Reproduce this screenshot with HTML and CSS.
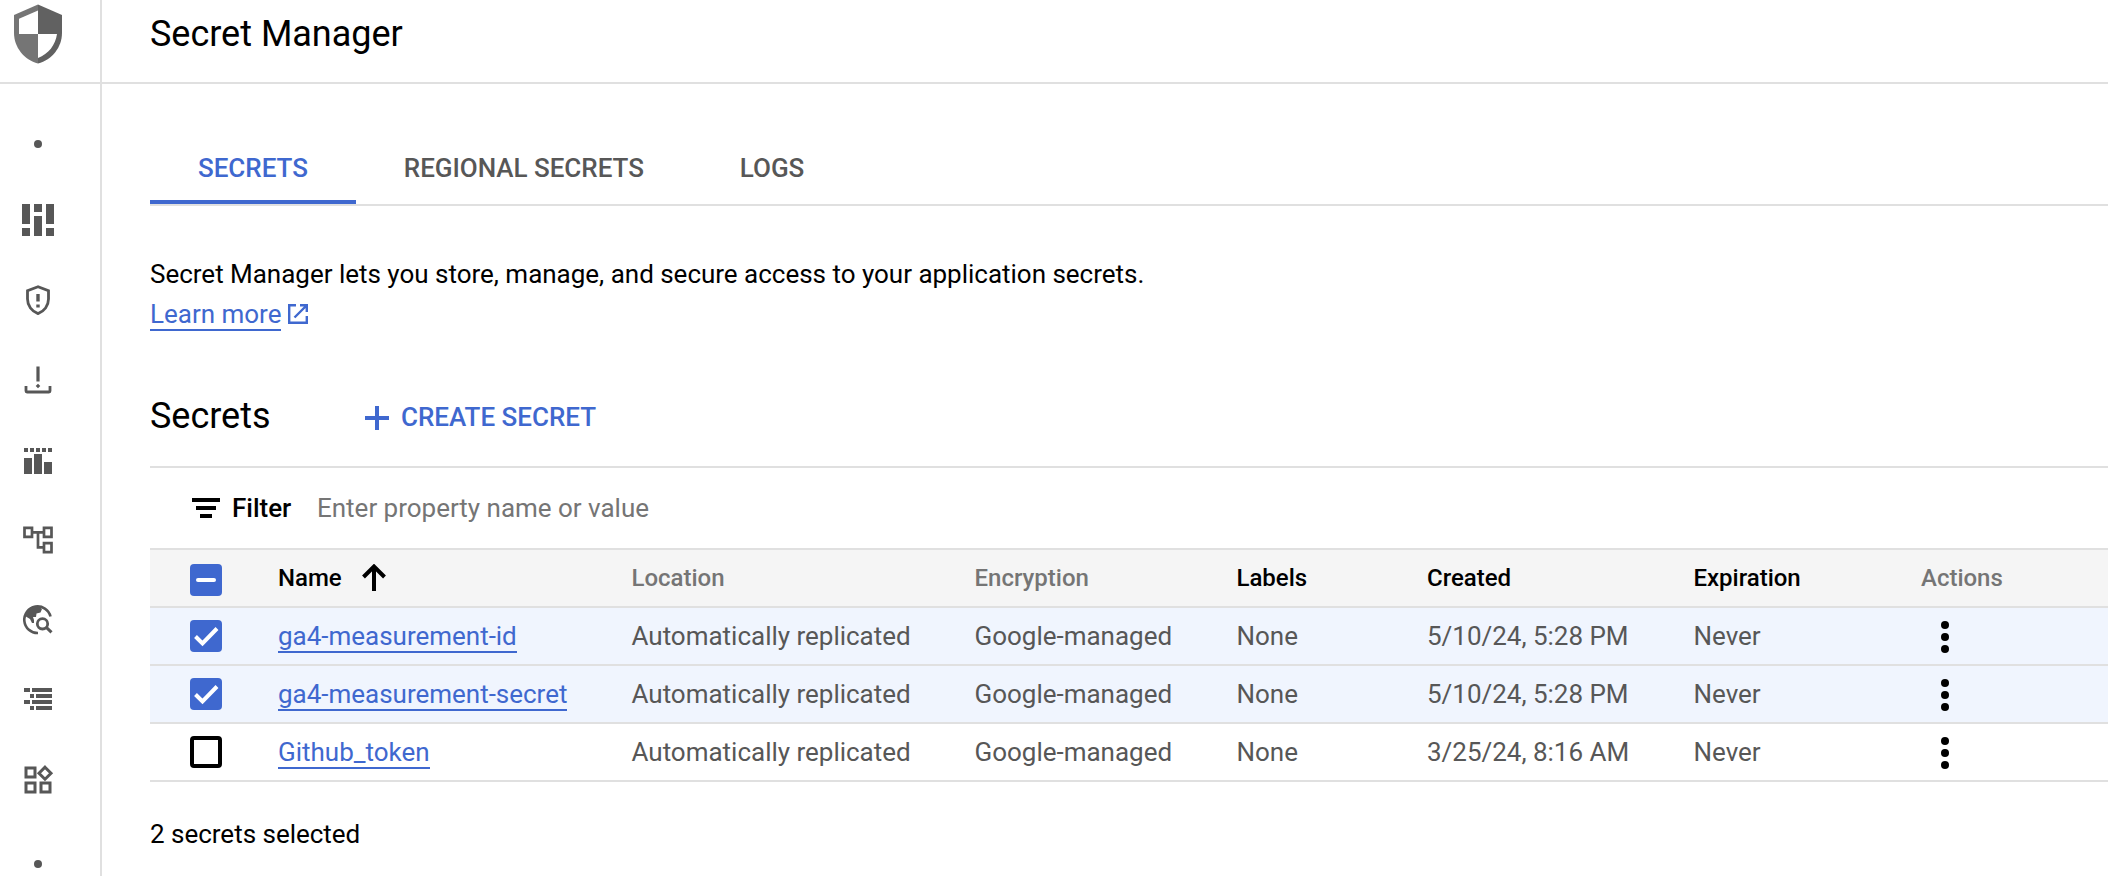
FILE: index.html
```html
<!DOCTYPE html>
<html lang="en">
<head>
<meta charset="utf-8">
<title>Secret Manager</title>
<link rel="stylesheet" href="styles.css">
</head>
<body>
<div class="app">
  <aside class="rail">
    <div class="rail-head">
      <svg class="product-icon" viewBox="0 0 48 60"><path fill="#757575" d="M24 .5 0 11v18c0 14 10 27 24 30.500z"/><path fill="#616161" d="M24 .5 48 11v18c0 14-10 27-24 30.500z"/><path fill="#fff" d="M24 6.500 5 14.800V30h19zM24 30h19c-1.500 11-8.500 20-19 24z"/></svg>
    </div>
    <nav class="rail-nav">
      <span class="dot dot-first"></span>
      <svg class="nav-icon" viewBox="0 0 40 40"><path d="M4 4h8v20H4zM4 28h8v8H4zM16 4h8v8h-8zM16 16h8v20h-8zM28 4h8v20h-8zM28 28h8v8h-8z"/></svg>
      <svg class="nav-icon" viewBox="0 0 40 40"><path class="line" stroke-width="2.800" d="M20 6.700 9.500 10.700v8.300c0 6.700 4.300 12.500 10.500 14.600 6.200-2.100 10.500-7.900 10.500-14.600v-8.300z"/><path d="M18.300 14h3.400v7.500h-3.400zM18.300 24.500h3.400v3h-3.400z"/></svg>
      <svg class="nav-icon" viewBox="0 0 40 40"><path d="M18.400 6.500h3.200v15h-3.200zM20 23.700l2.300 2.300-2.300 2.300-2.300-2.300z"/><path class="line" stroke-width="2.800" d="M8 26v5q0 1 1 1h22q1 0 1-1v-5"/></svg>
      <svg class="nav-icon" viewBox="0 0 40 40"><path d="M6 8h4v4H6zM12 8h4v4h-4zM18 8h4v4h-4zM24 8h4v4h-4zM30 8h4v4h-4zM6 18h8v16H6zM16 14h8v20h-8zM26 22h8v12h-8z"/></svg>
      <svg class="nav-icon" viewBox="0 0 40 40"><path class="line" stroke-width="2.700" d="M6.500 7.800h7.500v9H6.500zM26 7.800h7.500v9H26zM26 23.200h7.500v9H26zM14 12.400h12M20 12.400v15h6"/></svg>
      <svg class="nav-icon" viewBox="0 0 40 40"><path class="line" stroke-width="2.600" d="M32.500 16.500A13.300 13.300 0 1 0 20 33"/><path d="M8 13C10 8 15 5 21 6.500l3 2.500-1.500 3.500-4 1-.5 3.500h-3l1 3v3h-2l-2-4-5-3z"/><circle class="line" stroke-width="2.800" cx="24.500" cy="23.800" r="5.200"/><path class="line" stroke-width="3" d="M28.300 27.300l5.200 5"/></svg>
      <svg class="nav-icon" viewBox="0 0 40 40"><path d="M6 8h6v4H6zM14 8h20v4H14zM12 14h4v4h-4zM18 14h16v4H18zM6 20h6v4H6zM14 20h20v4H14zM12 26h4v4h-4zM18 26h16v4H18z"/></svg>
      <svg class="nav-icon" viewBox="0 0 40 40"><path class="line" stroke-width="3" d="M8 8h9v9H8zM8 23h9v9H8zM23 23h9v9h-9zM27 7.200l6 6-6 6-6-6z"/></svg>
      <span class="dot dot-last"></span>
    </nav>
  </aside>
  <main class="main">
    <header class="page-head"><h1 class="title">Secret Manager</h1></header>
    <div class="content">
      <div class="tabs">
        <a class="tab active">SECRETS</a>
        <a class="tab">REGIONAL SECRETS</a>
        <a class="tab">LOGS</a>
      </div>
      <p class="intro">Secret Manager lets you store, manage, and secure access to your application secrets.</p>
      <div class="learn">
        <a class="link">Learn more</a>
        <svg class="ext-icon" viewBox="0 0 20 20"><path d="M8 1.200H1.200v17.600h17.600V12M12 1.200h6.800V8M18.500 1.500 6.500 13.500"/></svg>
      </div>
      <div class="section-head">
        <h2 class="title section-title">Secrets</h2>
        <a class="create">
          <svg class="plus" viewBox="0 0 24 24"><path d="M10 0h4v10h10v4H14v10h-4V14H0v-4h10z"/></svg>
          <span>CREATE SECRET</span>
        </a>
      </div>
      <div class="filter">
        <svg class="filter-icon" viewBox="0 0 28 20"><path d="M0 0h28v4H0zM4 8h20v4H4zM8 16h12v4H8z"/></svg>
        <span class="filter-label">Filter</span>
        <span class="filter-hint">Enter property name or value</span>
      </div>
      <div class="table">
        <div class="row head">
          <span class="box"><svg viewBox="0 0 32 32"><rect class="fill" width="32" height="32" rx="4"/><path class="mark" stroke-linecap="round" d="M8 16h16"/></svg></span>
          <span class="cell sortable">Name<svg class="arrow" viewBox="0 0 24 28"><path d="M12 27V3M1.500 13 12 2.500 22.500 13"/></svg></span>
          <span class="cell muted">Location</span>
          <span class="cell muted">Encryption</span>
          <span class="cell">Labels</span>
          <span class="cell">Created</span>
          <span class="cell">Expiration</span>
          <span class="cell muted">Actions</span>
        </div>
        <div class="row selected">
          <span class="box"><svg viewBox="0 0 32 32"><rect class="fill" width="32" height="32" rx="4"/><path class="mark" d="M5.500 16.500l7 7L27 8.500"/></svg></span>
          <span class="cell"><a class="link">ga4-measurement-id</a></span>
          <span class="cell">Automatically replicated</span>
          <span class="cell">Google-managed</span>
          <span class="cell">None</span>
          <span class="cell">5/10/24, 5:28 PM</span>
          <span class="cell">Never</span>
          <span class="more"><svg viewBox="0 0 8 32"><circle cx="4" cy="4" r="4"/><circle cx="4" cy="16" r="4"/><circle cx="4" cy="28" r="4"/></svg></span>
        </div>
        <div class="row selected">
          <span class="box"><svg viewBox="0 0 32 32"><rect class="fill" width="32" height="32" rx="4"/><path class="mark" d="M5.500 16.500l7 7L27 8.500"/></svg></span>
          <span class="cell"><a class="link">ga4-measurement-secret</a></span>
          <span class="cell">Automatically replicated</span>
          <span class="cell">Google-managed</span>
          <span class="cell">None</span>
          <span class="cell">5/10/24, 5:28 PM</span>
          <span class="cell">Never</span>
          <span class="more"><svg viewBox="0 0 8 32"><circle cx="4" cy="4" r="4"/><circle cx="4" cy="16" r="4"/><circle cx="4" cy="28" r="4"/></svg></span>
        </div>
        <div class="row">
          <span class="box"><svg viewBox="0 0 32 32"><rect class="empty" x="2" y="2" width="28" height="28" rx="2"/></svg></span>
          <span class="cell"><a class="link">Github_token</a></span>
          <span class="cell">Automatically replicated</span>
          <span class="cell">Google-managed</span>
          <span class="cell">None</span>
          <span class="cell">3/25/24, 8:16 AM</span>
          <span class="cell">Never</span>
          <span class="more"><svg viewBox="0 0 8 32"><circle cx="4" cy="4" r="4"/><circle cx="4" cy="16" r="4"/><circle cx="4" cy="28" r="4"/></svg></span>
        </div>
      </div>
      <p class="status">2 secrets selected</p>
    </div>
  </main>
</div>
</body>
</html>
```
FILE: styles.css
```css
* { box-sizing: border-box; }
body {
  margin: 0;
  background: #fff;
  color: #000;
  font: 400 26px/40px Roboto, "Liberation Sans", sans-serif;
  letter-spacing: -0.013px;
}
svg { display: block; flex: none; }
.app { display: flex; height: 876px; overflow: hidden; }
.rail { flex: none; width: 102px; border-right: 2px solid #e0e0e0; }
.rail-head { height: 84px; padding: 4px 0 0 14px; border-bottom: 2px solid #e0e0e0; }
.product-icon { width: 48px; height: 60px; }
.rail-nav { width: 76px; padding-top: 56px; display: flex; flex-direction: column; align-items: center; gap: 40px; }
.nav-icon { width: 40px; height: 40px; fill: #575757; }
.nav-icon .line { fill: none; stroke: #575757; }
.dot { flex: none; width: 8px; height: 8px; border-radius: 50%; background: #575757; }
.dot-first { margin-bottom: 12px; }
.dot-last { margin-top: 20px; }

.main { flex: 1; min-width: 0; }
.page-head { height: 84px; padding: 10px 0 0 48px; border-bottom: 2px solid #e0e0e0; }
.title { margin: 0; font-size: 36px; line-height: 48px; font-weight: 400; }
.content { padding: 44px 0 0 48px; }

.tabs { display: flex; height: 78px; border-bottom: 2px solid #e0e0e0; font-weight: 500; color: #575757; letter-spacing: -0.035px; }
.tab { height: 76px; padding: 20px 48px 0; }
.tab.active { color: #3f68cf; border-bottom: 4px solid #3f68cf; }

.intro { margin: 48px 0 0; }
.learn { display: flex; gap: 7px; height: 40px; padding-top: 5px; }
.link { display: inline-block; height: 32px; line-height: 30px; border-bottom: 2px solid #3f68cf; color: #3f68cf; }
.learn .link { width: 131px; white-space: nowrap; }
.ext-icon { width: 20px; height: 20px; margin-top: 5px; fill: none; stroke: #3f68cf; stroke-width: 2.4; }

.section-head { display: flex; height: 134px; padding-top: 58px; border-bottom: 2px solid #e0e0e0; }
.section-title { width: 215px; }
.create { display: flex; gap: 12px; padding-top: 5px; font-weight: 500; color: #3f68cf; }
.plus { width: 24px; height: 24px; margin-top: 9px; fill: #3f68cf; }

.filter { display: flex; height: 80px; padding: 20px 0 0 42px; }
.filter-icon { width: 28px; height: 20px; margin: 10px 12px 0 0; }
.filter-label { width: 85px; font-weight: 500; }
.filter-hint { color: #757575; }

.table { border-top: 2px solid #e0e0e0; }
.row {
  display: grid;
  grid-template-columns: 128px 353.5px 343px 262px 190.5px 266.5px 227.5px 1fr;
  align-items: center;
  height: 58px;
  border-bottom: 2px solid #e0e0e0;
  color: #575757;
}
.row.selected { background: #f0f5fe; }
.row.head { background: #f5f5f5; color: #000; font-size: 24px; font-weight: 500; }
.head .muted { color: #757575; }
.cell { white-space: nowrap; }
.row .link { display: block; width: max-content; margin-top: 2px; }
.box { padding-left: 40px; }
.box svg { width: 32px; height: 32px; }
.head .box { padding-top: 4px; }
.fill { fill: #3f68cf; }
.mark { fill: none; stroke: #fff; stroke-width: 4; }
.empty { fill: #fff; stroke: #000; stroke-width: 4; }
.sortable { display: flex; align-items: center; gap: 20px; }
.arrow { width: 24px; height: 28px; fill: none; stroke: #000; stroke-width: 4; }
.more { padding-left: 20px; }
.more svg { width: 8px; height: 32px; margin-top: 2px; fill: #000; }
.status { margin: 32px 0 0; }
```
